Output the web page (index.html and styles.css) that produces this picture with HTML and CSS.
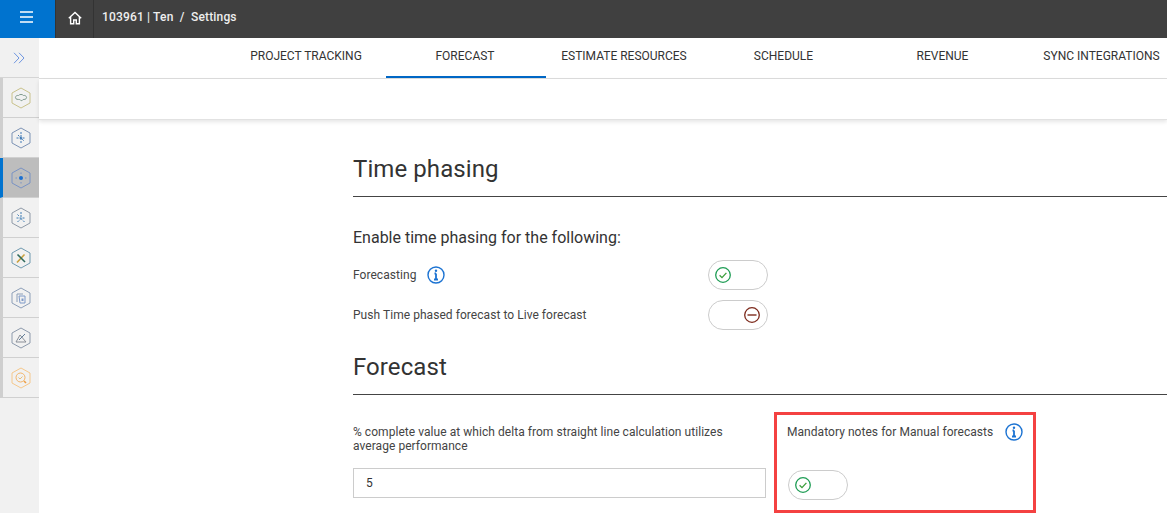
FILE: index.html
```html
<!DOCTYPE html>
<html lang="en">
<head>
<meta charset="utf-8">
<title>Settings</title>
<link rel="stylesheet" href="styles.css">
</head>
<body>
<header class="topbar">
  <button class="menu" aria-label="Menu">
    <svg width="14" height="12" viewBox="0 0 14 12"><path d="M0 1h13M0 6h13M0 11h13" stroke="#fff" stroke-width="1.6" fill="none"/></svg>
  </button>
  <div class="home">
    <svg width="14" height="14" viewBox="0 0 14 14" fill="none" stroke="#fff" stroke-width="1.4"><path d="M.8 7.2 7 1.4l6.2 5.8M2.6 6v6.8h3.1V9h2.6v3.8h3.1V6"/></svg>
  </div>
  <div class="crumb">103961 | Ten&nbsp; /&nbsp; Settings</div>
</header>
<div class="body">
  <nav class="rail">
    <div class="expand">
      <svg width="12" height="12" viewBox="0 0 12 12" fill="none" stroke="#6f96e0" stroke-width="1"><path d="M1 .8 6 6l-5 5.2M6 .8 11 6l-5 5.2"/></svg>
    </div>
    <div class="rail-item">
      <svg class="hex" viewBox="0 0 20 22" fill="none"><path d="M10 1 19 6v10l-9 5-9-5V6z" stroke="#c9c28c"/><path d="M5 11.800c-1.600-1.800.5-3.800 2.500-3.300 1-1.400 4-1.400 5 0 2-.5 4.100 1.500 2.500 3.300-1 1-3 .3-3.500 1.200-.4.800-1.600.8-2 0-.5-.9-3.500-.2-4.500-1.200z" stroke="#7f9a8c"/></svg>
    </div>
    <div class="rail-item">
      <svg class="hex" viewBox="0 0 20 22" fill="none"><path d="M10 1 19 6v10l-9 5-9-5V6z" stroke="#7d93b5"/><path d="M10 5v12M5.500 11h9M7 8l6 6" stroke="#3f78b5" stroke-dasharray="2 1"/><circle cx="10" cy="11" r="1" fill="#3f78b5"/></svg>
    </div>
    <div class="rail-item active">
      <svg class="hex" viewBox="0 0 20 22" fill="none"><path d="M10 1 19 6v10l-9 5-9-5V6z" stroke="#7a93c4"/><circle cx="10" cy="11" r="2" fill="#1c6fd0"/><path d="M10 5.500v1.500M10 15v1.500M4.500 11H6M14 11h1.500" stroke="#7a93c4"/></svg>
    </div>
    <div class="rail-item">
      <svg class="hex" viewBox="0 0 20 22" fill="none"><path d="M10 1 19 6v10l-9 5-9-5V6z" stroke="#8f9aa8"/><path d="M10 5v8M5.500 11h9M6.500 15l2.500-2.500M13.500 15 11 12.500M6.500 7.500l2 2" stroke="#3f7cb4" stroke-dasharray="2 1"/></svg>
    </div>
    <div class="rail-item">
      <svg class="hex" viewBox="0 0 20 22" fill="none"><path d="M10 1 19 6v10l-9 5-9-5V6z" stroke="#6f9ab0"/><path d="M6 15.500 13.500 7.500" stroke="#c8a03c" stroke-width="1.600"/><path d="M6.500 7.500l7.500 7.500" stroke="#2f6a5c" stroke-width="1.600"/></svg>
    </div>
    <div class="rail-item">
      <svg class="hex" viewBox="0 0 20 22" fill="none"><path d="M10 1 19 6v10l-9 5-9-5V6z" stroke="#8d9fb8"/><path d="M6 15V7h6" stroke="#8d9fb8"/><path d="M8 9h6v7H9z" stroke="#7f9ac8"/><path d="M10.500 11.500h2v2.500h-2z" fill="#7f9ac8"/></svg>
    </div>
    <div class="rail-item">
      <svg class="hex" viewBox="0 0 20 22" fill="none"><path d="M10 1 19 6v10l-9 5-9-5V6z" stroke="#8d9aac"/><path d="M5 15h10L9 8z" stroke="#8a8f98"/><path d="M8 13l6-6" stroke="#5f7c98"/></svg>
    </div>
    <div class="rail-item">
      <svg class="hex" viewBox="0 0 20 22" fill="none"><path d="M10 1 19 6v10l-9 5-9-5V6z" stroke="#f5c88c"/><circle cx="9.500" cy="10.500" r="4.500" stroke="#f2b56a"/><path d="m7.500 10.500 1.500 1.500 2.500-2.500" stroke="#e8c07a"/><path d="m13 14 2 2" stroke="#ee9f45" stroke-width="1.600"/></svg>
    </div>
  </nav>
  <main class="main">
    <div class="tabs">
      <a class="tab first">PROJECT TRACKING</a>
      <a class="tab current">FORECAST</a>
      <a class="tab">ESTIMATE RESOURCES</a>
      <a class="tab">SCHEDULE</a>
      <a class="tab">REVENUE</a>
      <a class="tab">SYNC INTEGRATIONS</a>
    </div>
    <div class="subbar"></div>
    <section class="content">
      <h2 class="heading">Time phasing</h2>
      <p class="lead">Enable time phasing for the following:</p>
      <div class="row">
        <span class="label">Forecasting</span>
        <svg class="info gap-info" viewBox="0 0 18 18" fill="none"><circle cx="9" cy="9" r="8" stroke="#1c73d2" stroke-width="1.400"/><path d="M9 7.500v6M7 13.500h4M7.500 7.500H9" stroke="#1c73d2" stroke-width="1.800"/><circle cx="9" cy="4.700" r="1.200" fill="#1c73d2"/></svg>
        <div class="toggle on"><svg class="tick" viewBox="0 0 16 16" fill="none"><circle cx="8" cy="8" r="7.300" stroke="#1f9d55" stroke-width="1.300"/><path d="m4.600 8.300 2.400 2.300 4.400-4.700" stroke="#3a9d3a" stroke-width="1.300"/></svg></div>
      </div>
      <div class="row">
        <span class="label">Push Time phased forecast to Live forecast</span>
        <div class="toggle off"><svg class="tick" viewBox="0 0 16 16" fill="none"><circle cx="8" cy="8" r="7.300" stroke="#7d2a1c" stroke-width="1.300"/><path d="M3.500 8h9" stroke="#7d2a1c" stroke-width="1.400"/></svg></div>
      </div>
      <h2 class="heading second">Forecast</h2>
      <div class="fields">
        <div class="field">
          <label class="label wrap">% complete value at which delta from straight line calculation utilizes average performance</label>
          <input class="text" value="5">
        </div>
        <div class="callout">
          <div class="callout-head">
            <span class="label">Mandatory notes for Manual forecasts</span>
            <svg class="info" viewBox="0 0 18 18" fill="none"><circle cx="9" cy="9" r="8" stroke="#1c73d2" stroke-width="1.400"/><path d="M9 7.500v6M7 13.500h4M7.500 7.500H9" stroke="#1c73d2" stroke-width="1.800"/><circle cx="9" cy="4.700" r="1.200" fill="#1c73d2"/></svg>
          </div>
          <div class="toggle on shift"><svg class="tick" viewBox="0 0 16 16" fill="none"><circle cx="8" cy="8" r="7.300" stroke="#1f9d55" stroke-width="1.300"/><path d="m4.600 8.300 2.400 2.300 4.400-4.700" stroke="#3a9d3a" stroke-width="1.300"/></svg></div>
        </div>
      </div>
    </section>
  </main>
</div>
</body>
</html>
```
FILE: styles.css
```css
* { box-sizing: border-box; }
html, body { margin: 0; height: 513px; overflow: hidden; }
body { font-family: Roboto, "Liberation Sans", sans-serif; color: #333; background: #fff; }
.topbar { display: flex; height: 38px; background: #404040; color: #fff; }
.menu { width: 55px; background: #0073cf; border: 0; padding: 0 1px 4px 0; display: flex; align-items: center; justify-content: center; }
.home { width: 39px; display: flex; align-items: center; justify-content: center; border-left: 1px solid #333; border-right: 1px solid #333; padding-bottom: 3px; }
.crumb { font-size: 12px; font-weight: 500; letter-spacing: .17px; padding-left: 8px; line-height: 34px; color: #eee; }
.body { display: flex; height: 475px; }
.rail { width: 39px; flex: none; background: #f1f1f1; }
.expand { height: 40px; padding-right: 1px; display: flex; align-items: center; justify-content: center; border-bottom: 1px solid #d5d5d5; }
.rail-item { height: 40px; border-left: 3px solid #cfcfcf; border-bottom: 1px solid #d0d0d0; display: flex; align-items: center; justify-content: center; padding-right: 1px; }
.rail-item.active { background: #bdbdbd; border-left-color: #0073cf; }
.hex { width: 20px; height: 22px; }
.main { flex: 1; min-width: 0; }
.tabs { display: flex; height: 41px; padding-left: 187px; border-bottom: 1px solid #ddd; white-space: nowrap; }
.tab { flex: 0 0 159px; height: 40px; text-align: center; font-size: 12px; line-height: 36px; color: #333; }
.tab.first { flex-basis: 160px; }
.tab.current { flex-basis: 160px; padding-right: 2px; border-bottom: 2px solid #0067c5; }
.tab.current + .tab { flex-basis: 160px; margin-left: -2px; }
.subbar { height: 41px; border-bottom: 1px solid #e2e2e2; box-shadow: 0 2px 4px rgba(0,0,0,.1); }
.content { padding: 31px 0 0 314px; }
.heading { margin: 0; height: 46px; border-bottom: 1px solid #444; font-size: 24px; font-weight: 400; letter-spacing: .08px; line-height: 36px; color: #333; }
.lead { margin: 31px 0 0; font-size: 16px; line-height: 19px; color: #333; }
.row { display: flex; align-items: center; height: 40px; padding-right: 399px; }
.lead + .row { margin-top: 8px; }
.label { font-size: 12px; line-height: 14px; letter-spacing: .05px; color: #444; }
.info { width: 18px; height: 18px; flex: none; }
.gap-info { margin-left: 11px; }
.toggle { width: 60px; height: 30px; border: 1px solid #ccc; border-radius: 15px; display: flex; align-items: center; padding: 0 7px 0 6px; background: #fff; }
.toggle.shift { margin-left: 1px; }
.row .toggle { margin-left: auto; }
.toggle.off { justify-content: flex-end; }
.tick { width: 16px; height: 16px; }
.second { margin-top: 14px; line-height: 37px; }
.fields { display: flex; align-items: flex-start; margin-top: 18px; }
.field { width: 413px; flex: none; padding-top: 12px; }
.wrap { display: block; width: 400px; }
.text { display: block; width: 100%; height: 30px; margin-top: 15px; border: 1px solid #ccc; padding: 0 12px; font: 12px Roboto, sans-serif; color: #333; outline: 0; }
.callout { width: 262px; height: 101px; margin: -1px 0 0 8px; border: 3px solid #f44141; padding: 6px 10px; }
.callout-head { display: flex; align-items: center; justify-content: space-between; height: 22px; margin-bottom: 27px; }
```
